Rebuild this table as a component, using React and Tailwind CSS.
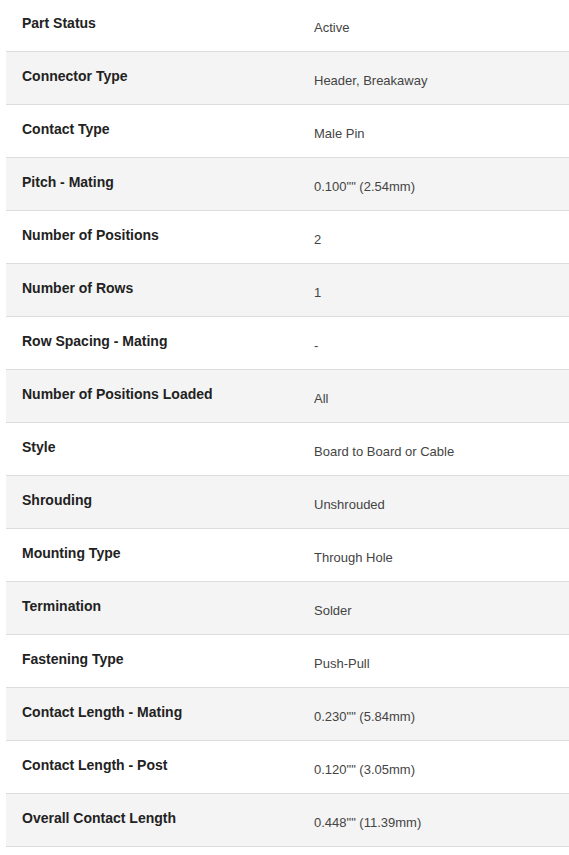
const specs = [
  ['Part Status', 'Active'],
  ['Connector Type', 'Header, Breakaway'],
  ['Contact Type', 'Male Pin'],
  ['Pitch - Mating', '0.100"" (2.54mm)'],
  ['Number of Positions', '2'],
  ['Number of Rows', '1'],
  ['Row Spacing - Mating', '-'],
  ['Number of Positions Loaded', 'All'],
  ['Style', 'Board to Board or Cable'],
  ['Shrouding', 'Unshrouded'],
  ['Mounting Type', 'Through Hole'],
  ['Termination', 'Solder'],
  ['Fastening Type', 'Push-Pull'],
  ['Contact Length - Mating', '0.230"" (5.84mm)'],
  ['Contact Length - Post', '0.120"" (3.05mm)'],
  ['Overall Contact Length', '0.448"" (11.39mm)'],
];

export default function App() {
  return (
    <div className="bg-white min-h-screen pl-[6px] font-['Liberation_Sans',Arial,sans-serif] overflow-hidden">
      <div className="-mt-px">
        {specs.map(([label, value], i) => (
          <div
            key={label}
            className={`flex h-[53px] border-b border-[#dddddd] ${i % 2 === 1 ? 'bg-[#f4f4f4]' : 'bg-white'}`}
          >
            <div className="w-[292px] shrink-0 pl-4 pt-[14px] text-[14px] leading-[20px] font-bold text-[#222222]">
              {label}
            </div>
            <div className="pl-4 pt-[19px] text-[13px] leading-[20px] text-[#444444]">
              {value}
            </div>
          </div>
        ))}
      </div>
    </div>
  );
}
